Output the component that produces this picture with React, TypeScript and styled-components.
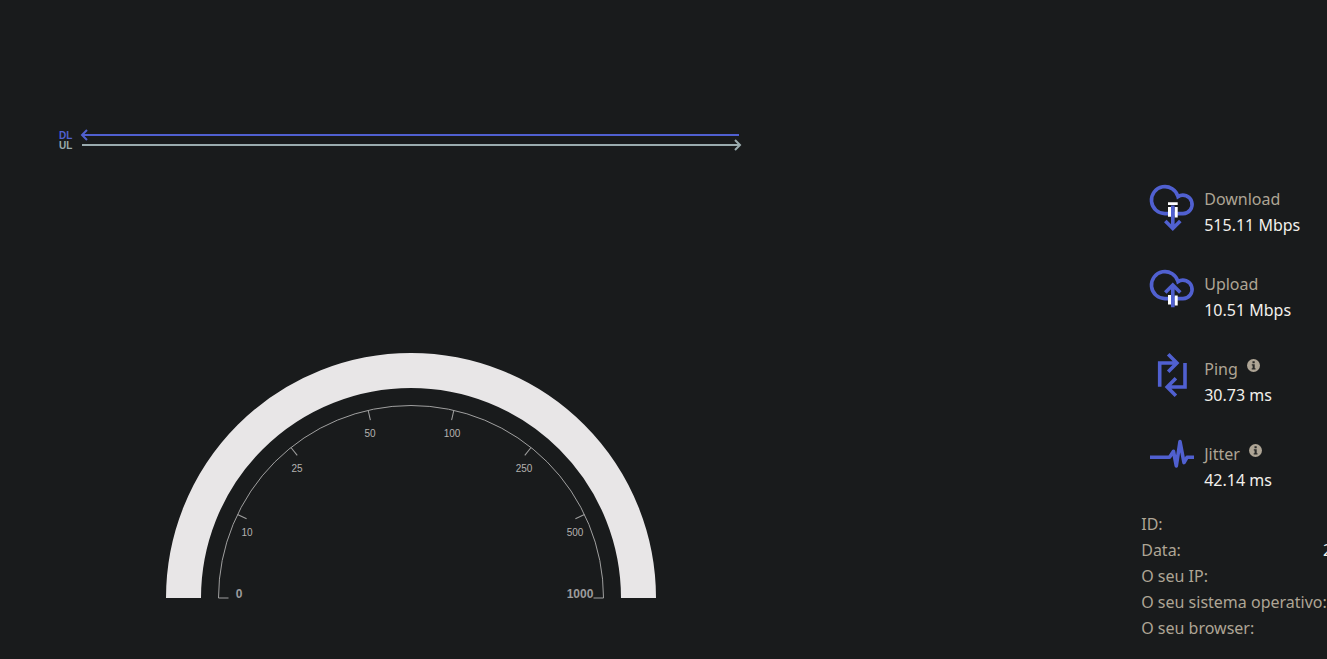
import React from "react";
import styled, { createGlobalStyle } from "styled-components";

const BLUE = "#5060d0";
const MUTED = "#aea595";
const UI_FONT = '"Noto Sans", "Open Sans", sans-serif';

const GlobalStyle = createGlobalStyle`
  * { box-sizing: border-box; }
  body { margin: 0; background: #191b1c; overflow: hidden; }
`;

const Page = styled.main`
  display: grid;
  grid-template-columns: 62% 24% minmax(0, 14%);
  min-height: 100vh;
  overflow: hidden;
  background: #191b1c;
  color: #f2f0ec;
  font-family: ${UI_FONT};
  font-size: 16px;
  line-height: 26px;
`;

const TestPanel = styled.section`
  display: flex;
  flex-direction: column;
  padding-top: 130px;
`;

const Charts = styled.div`
  display: flex;
  flex-direction: column;
  padding: 0 82px 0 59px;
`;

const ChartRow = styled.div<{ $color: string }>`
  display: flex;
  align-items: center;
  gap: 8px;
  height: 10px;
  color: ${(p) => p.$color};
`;

const ChartLabel = styled.span`
  width: 14px;
  font-family: "Liberation Sans", Arial, sans-serif;
  font-size: 10px;
  font-weight: 700;
  line-height: 10px;
  padding-top: 2px;
`;

const ArrowTrack = styled.div<{ $reverse?: boolean }>`
  display: flex;
  flex: 1;
  flex-direction: ${(p) => (p.$reverse ? "row-reverse" : "row")};
  align-items: center;
  padding: ${(p) => (p.$reverse ? "0 2px 0 0" : "0 0 0 1px")};
`;

const TrackLine = styled.div`
  flex: 1;
  height: 2px;
  background: currentColor;
`;

const ArrowTip = styled.svg`
  width: 8px;
  height: 12px;
  overflow: visible;
  fill: none;
  stroke: currentColor;
  stroke-width: 2;
`;

const Gauge = styled.svg`
  align-self: center;
  width: 490px;
  max-width: 100%;
  margin-top: 203px;
  overflow: visible;
`;

const TickLabel = styled.text<{ $large?: boolean }>`
  fill: ${(p) => (p.$large ? "#9c9c9c" : "#b4b2b0")};
  font-family: "Liberation Sans", Arial, sans-serif;
  font-size: ${(p) => (p.$large ? 12 : 10)}px;
  font-weight: ${(p) => (p.$large ? 700 : 400)};
  text-anchor: middle;
`;

const Results = styled.aside`
  grid-column: 3;
  padding-top: 183px;
`;

const MetricList = styled.ul`
  display: flex;
  flex-direction: column;
  gap: 12px;
  margin: 0;
  padding: 0 0 0 9px;
  list-style: none;
`;

const Metric = styled.li`
  display: flex;
  gap: 10px;
  height: 73px;
`;

const IconBox = styled.div`
  display: flex;
  justify-content: center;
  flex: none;
  width: 44px;
  padding-top: 1px;
`;

const MetricIcon = styled.svg`
  overflow: visible;
  fill: none;
  stroke: ${BLUE};
  stroke-width: 3.6;
`;

const MetricText = styled.div`
  padding-top: 3px;
  white-space: nowrap;
`;

const MetricName = styled.div`
  display: flex;
  gap: 9px;
  color: ${MUTED};
`;

const InfoButton = styled.button`
  display: block;
  height: 13px;
  margin-top: 3px;
  padding: 0;
  border: 0;
  background: none;
  cursor: pointer;

  svg { display: block; }
`;

const Details = styled.dl`
  width: 191px;
  margin: 0;
  white-space: nowrap;
`;

const DetailRow = styled.div`
  display: flex;
  justify-content: space-between;

  dt { color: ${MUTED}; }
  dd { margin: 0; }
`;

const CLOUD = "M33 29.6 H15.3 A13.5 13.5 0 1 1 28 12.6 A9.200 9.200 0 1 1 33 29.6 Z";

const DownloadIcon = () => (
  <MetricIcon width="44" height="47" viewBox="0 0 44 47">
    <path d={CLOUD} />
    <path d="M18 18.3h9.7v2.6H18zM18 23h3.2v9.8H18zM24.5 23h3.2v10.4h-3.2z" fill="#fff" stroke="none" />
    <path d="M22.8 21.5V44M15.3 37l7.5 7.5 7.5-7.5" />
  </MetricIcon>
);

const UploadIcon = () => (
  <MetricIcon width="44" height="47" viewBox="0 0 44 47">
    <path d={CLOUD} />
    <path d="M18 26h3.2v9.4H18zM24.5 26.6h3.2v9.8h-3.2z" fill="#fff" stroke="none" />
    <path d="M22.8 38.3V17M15.3 23.5l7.5-7.5 7.5 7.5" />
  </MetricIcon>
);

const PingIcon = () => (
  <MetricIcon width="30" height="44" viewBox="0 1 30 44" strokeWidth="4">
    <path d="M2.7 33.7V10H19M11.200 1.200l8.700 8.800-8.700 8.800M28 10v24H12M18.900 25.200L10.200 34l8.700 8.800" />
  </MetricIcon>
);

const JitterIcon = () => (
  <MetricIcon width="44" height="30" viewBox="0 0 44 30" strokeLinejoin="round">
    <path d="M0 18.3h19.5l4-6 2.8 14.7L30 2.6l4 21 3-5.3h7" />
  </MetricIcon>
);

const InfoMark = () => (
  <svg width="13" height="13" viewBox="0 0 13 13" aria-hidden="true">
    <circle cx="6.5" cy="6.5" r="6.5" fill={MUTED} />
    <path d="M5.5 2.3h2.2v1.9H5.5zM4.8 5.3h2.9v4h.8v1.3H4.7V9.3h.9V6.500h-.8z" fill="#292a29" />
  </svg>
);

const metrics = [
  { name: "Download", value: "515.11 Mbps", Icon: DownloadIcon },
  { name: "Upload", value: "10.51 Mbps", Icon: UploadIcon },
  { name: "Ping", value: "30.73 ms", Icon: PingIcon, info: true },
  { name: "Jitter", value: "42.14 ms", Icon: JitterIcon, info: true },
];

const details = [
  { name: "ID:" },
  { name: "Data:", value: "2" },
  { name: "O seu IP:" },
  { name: "O seu sistema operativo:" },
  { name: "O seu browser:" },
];

const tickLabels = [
  { text: "0", x: 73, y: 245, large: true },
  { text: "10", x: 81, y: 183 },
  { text: "25", x: 131, y: 119 },
  { text: "50", x: 204, y: 84 },
  { text: "100", x: 286, y: 84 },
  { text: "250", x: 358, y: 119 },
  { text: "500", x: 409, y: 183 },
  { text: "1000", x: 414, y: 245, large: true },
];

const SpeedGauge = () => (
  <Gauge viewBox="0 0 490 246" role="img" aria-label="Mbps">
    <path d="M17.5 245A227.5 227.5 0 0 1 472.5 245" fill="none" stroke="#e8e6e7" strokeWidth="35" />
    <g fill="none" stroke="#a0a0a0" strokeWidth="1">
      <path d="M52.5 245A192.5 192.5 0 0 1 437.5 245" />
      {tickLabels.map((tick, i) => (
        <path key={tick.text} d="M52.5 245h10" transform={`rotate(${(i * 180) / 7} 245 245)`} />
      ))}
    </g>
    {tickLabels.map((tick) => (
      <TickLabel key={tick.text} x={tick.x} y={tick.y} $large={tick.large}>
        {tick.text}
      </TickLabel>
    ))}
  </Gauge>
);

export default function App() {
  return (
    <>
      <GlobalStyle />
      <Page>
        <TestPanel>
          <Charts>
            <ChartRow $color={BLUE}>
              <ChartLabel>DL</ChartLabel>
              <ArrowTrack $reverse>
                <TrackLine />
                <ArrowTip viewBox="0 0 8 12"><path d="M8 6H1M6 1L1 6l5 5" /></ArrowTip>
              </ArrowTrack>
            </ChartRow>
            <ChartRow $color="#9aabae">
              <ChartLabel>UL</ChartLabel>
              <ArrowTrack>
                <TrackLine />
                <ArrowTip viewBox="0 0 8 12"><path d="M0 6h7M2 1l5 5-5 5" /></ArrowTip>
              </ArrowTrack>
            </ChartRow>
          </Charts>
          <SpeedGauge />
        </TestPanel>
        <Results>
          <MetricList>
            {metrics.map(({ name, value, Icon, info }) => (
              <Metric key={name}>
                <IconBox><Icon /></IconBox>
                <MetricText>
                  <MetricName>
                    {name}
                    {info && <InfoButton type="button" aria-label={name}><InfoMark /></InfoButton>}
                  </MetricName>
                  <div>{value}</div>
                </MetricText>
              </Metric>
            ))}
          </MetricList>
          <Details>
            {details.map(({ name, value }) => (
              <DetailRow key={name}>
                <dt>{name}</dt>
                {value && <dd>{value}</dd>}
              </DetailRow>
            ))}
          </Details>
        </Results>
      </Page>
    </>
  );
}
